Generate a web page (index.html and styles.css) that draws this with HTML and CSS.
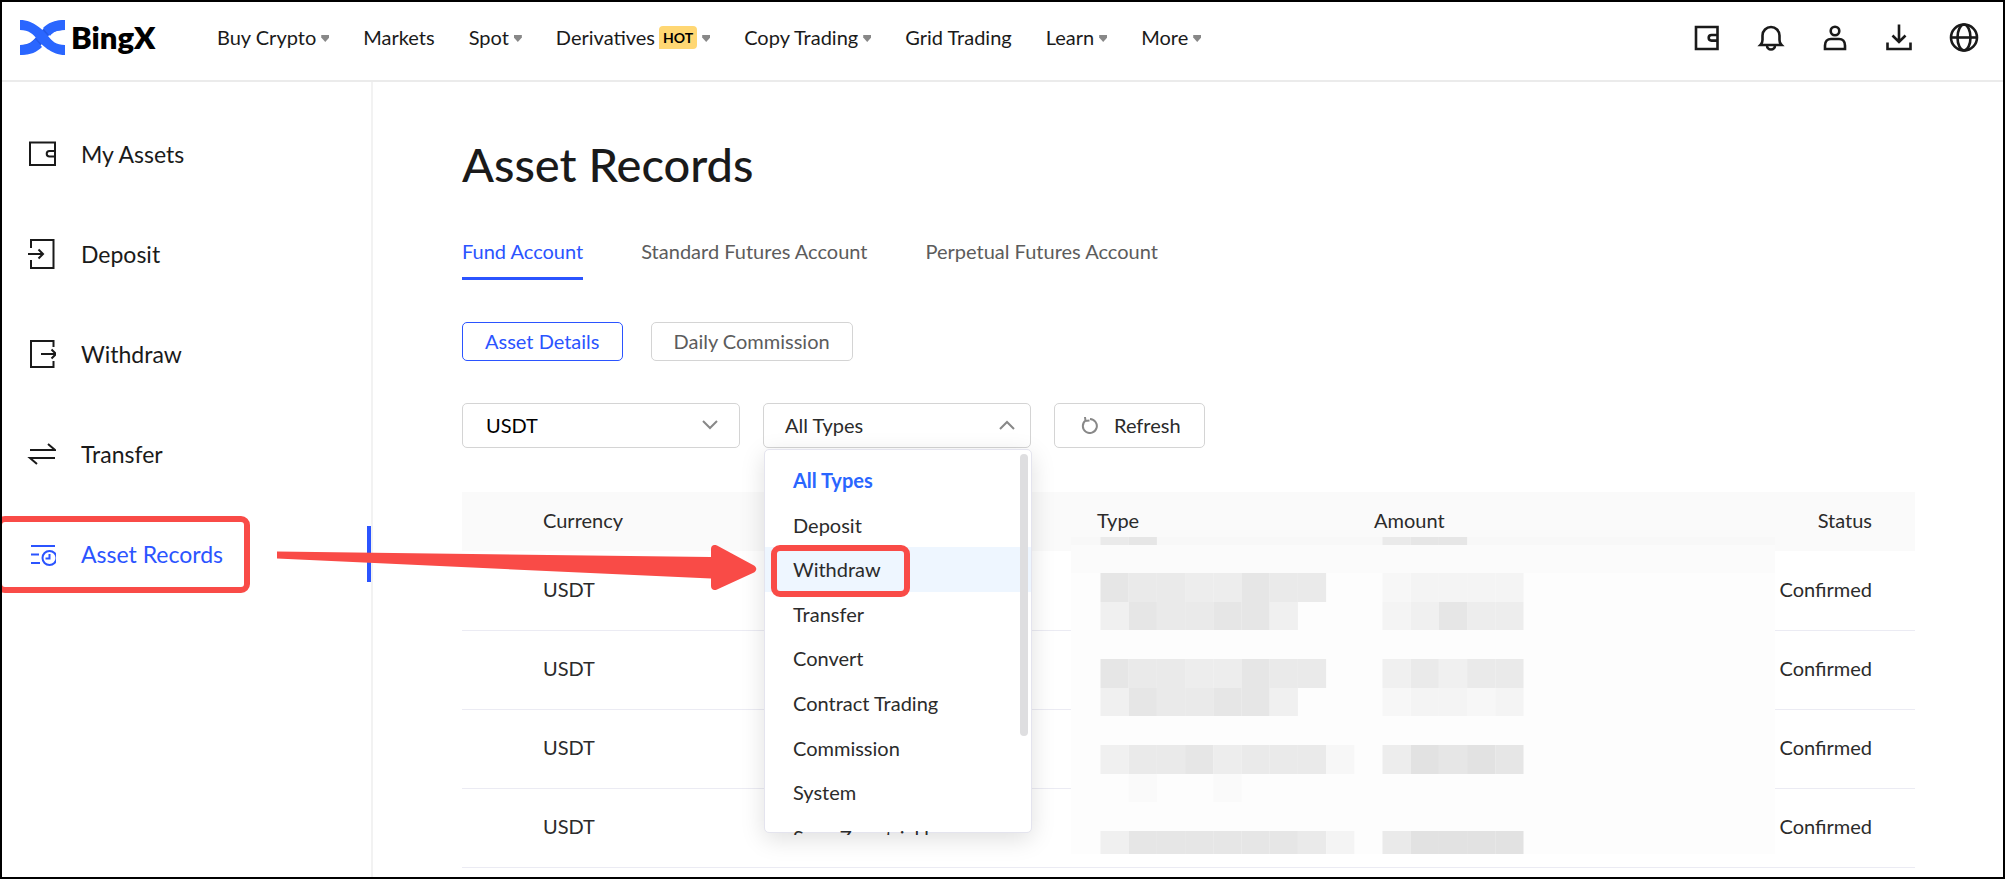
FILE: index.html
```html
<!DOCTYPE html>
<html lang="en">
<head>
<meta charset="utf-8">
<title>Asset Records - BingX</title>
<link rel="stylesheet" href="styles.css">
</head>
<body>
<header class="header">
  <a class="logo" href="#" aria-label="BingX">
    <svg class="logo-mark" width="45" height="35" viewBox="0 0 45 35" aria-hidden="true">
      <path d="M45 0v10C34 10 29 14 25 20S12 35 0 35V25c9 0 13-4 17-9S30 0 45 0z" fill="#2459e8"/>
      <path d="M0 0v10c9 0 13 4 17 9s14 16 28 16V25c-9 0-13-4-17-9S14 0 0 0z" fill="#2a66ff"/>
      <path d="M45 0v10c-8 0-12 2-15 6l-7-8C28 3 34 0 45 0zM0 35V25c8 0 12-2 15-6l7 8C17 32 11 35 0 35z" fill="#2a66ff"/>
    </svg>
    <span class="logo-text">BingX</span>
  </a>
  <nav class="nav">
    <a class="nav-link" href="#">Buy Crypto<i class="caret"></i></a>
    <a class="nav-link" href="#">Markets</a>
    <a class="nav-link" href="#">Spot<i class="caret"></i></a>
    <a class="nav-link" href="#">Derivatives<span class="hot">HOT</span><i class="caret"></i></a>
    <a class="nav-link" href="#">Copy Trading<i class="caret"></i></a>
    <a class="nav-link" href="#">Grid Trading</a>
    <a class="nav-link" href="#">Learn<i class="caret"></i></a>
    <a class="nav-link" href="#">More<i class="caret"></i></a>
  </nav>
  <div class="tools">
    <button class="tool" type="button" aria-label="Wallet"><svg width="28" height="28" viewBox="0 0 28 28"><path d="M3 4h21.500v22H3zM24.500 12h-6a2.800 2.800 0 0 0 0 5.600h6"/></svg></button>
    <button class="tool" type="button" aria-label="Notifications"><svg width="28" height="28" viewBox="0 0 28 28"><path d="M3.500 22c1.500-1.500 2-3 2-5v-4.500a8.500 8.500 0 0 1 17 0V17c0 2 .5 3.500 2 5zM10 22.500a4 4 0 0 0 8 0"/></svg></button>
    <button class="tool" type="button" aria-label="Account"><svg width="28" height="28" viewBox="0 0 28 28"><circle cx="14" cy="8" r="4.300"/><path d="M4 26v-3.500c0-4 2.500-6.500 6-6.500h8c3.500 0 6 2.500 6 6.500V26z"/></svg></button>
    <button class="tool" type="button" aria-label="Download"><svg width="28" height="28" viewBox="0 0 28 28"><path d="M14 1.500v17M7.500 12.500l6.500 6.500 6.500-6.500M2.500 19.500V26h23v-6.500"/></svg></button>
    <button class="tool" type="button" aria-label="Language"><svg width="30" height="30" viewBox="0 0 30 30"><circle cx="15" cy="15.500" r="13"/><ellipse cx="15" cy="15.500" rx="6.500" ry="13"/><path d="M2 15.500h26"/></svg></button>
  </div>
</header>
<div class="page">
  <aside class="sidebar">
    <a class="side-link" href="#"><svg width="30" height="30" viewBox="0 0 30 30"><path d="M4 3.500h25V26H4zM29 12h-5.500a2.800 2.800 0 0 0 0 5.600H29"/></svg>My Assets</a>
    <a class="side-link" href="#"><svg width="30" height="30" viewBox="0 0 30 30"><path d="M5 9V1h22.500v28H5v-8M2 15h14M12.500 10.500L17 15l-4.500 4.500"/></svg>Deposit</a>
    <a class="side-link" href="#"><svg width="30" height="30" viewBox="0 0 30 30"><path d="M27.500 8V2H5v26h22.500v-6M15 15h15M25.500 10.500L30 15l-4.500 4.500"/></svg>Withdraw</a>
    <a class="side-link" href="#"><svg width="30" height="30" viewBox="0 0 30 30"><path d="M4 11h25l-7-6M29 19H4l7 6"/></svg>Transfer</a>
    <a class="side-link active" href="#" aria-current="page"><svg width="30" height="30" viewBox="0 0 30 30"><path d="M5 7h24M5 15.500h8M5 24h9"/><circle cx="23.500" cy="19" r="7"/><path d="M23.500 15v4.500h-4"/></svg>Asset Records</a>
  </aside>
  <main class="main">
    <h1 class="title">Asset Records</h1>
    <nav class="tabs">
      <a class="tab active" href="#">Fund Account</a>
      <a class="tab" href="#">Standard Futures Account</a>
      <a class="tab" href="#">Perpetual Futures Account</a>
    </nav>
    <div class="views">
      <button class="view active" type="button">Asset Details</button>
      <button class="view" type="button">Daily Commission</button>
    </div>
    <div class="filters">
      <button class="picker picker-currency" type="button" aria-haspopup="listbox">USDT<svg width="16" height="10" viewBox="0 0 16 10"><path d="M1 1l7 7 7-7"/></svg></button>
      <div class="picker-wrap">
        <button class="picker picker-type" type="button" aria-haspopup="listbox" aria-expanded="true">All Types<svg width="16" height="10" viewBox="0 0 16 10"><path d="M1 9l7-7 7 7"/></svg></button>
        <div class="menu">
          <ul class="options" role="listbox" aria-label="Type">
            <li class="option selected" role="option" aria-selected="true">All Types</li>
            <li class="option" role="option">Deposit</li>
            <li class="option hover" role="option">Withdraw</li>
            <li class="option" role="option">Transfer</li>
            <li class="option" role="option">Convert</li>
            <li class="option" role="option">Contract Trading</li>
            <li class="option" role="option">Commission</li>
            <li class="option" role="option">System</li>
            <li class="option" role="option">SwapZero trial bonuses</li>
          </ul>
          <span class="scrollbar"></span>
          <span class="mark mark-option"></span>
        </div>
      </div>
      <button class="refresh" type="button"><svg width="17" height="18" viewBox="0 0 17 18"><path d="M4.500 4.500A7 7 0 1 0 9 3M4 1l.5 4 4-.5"/></svg>Refresh</button>
    </div>
    <div class="records">
      <table class="table">
        <thead><tr><th class="col-currency">Currency</th><th class="col-type">Type</th><th class="col-amount">Amount</th><th class="col-status">Status</th></tr></thead>
        <tbody>
          <tr><td>USDT</td><td></td><td></td><td>Confirmed</td></tr>
          <tr><td>USDT</td><td></td><td></td><td>Confirmed</td></tr>
          <tr><td>USDT</td><td></td><td></td><td>Confirmed</td></tr>
          <tr><td>USDT</td><td></td><td></td><td>Confirmed</td></tr>
        </tbody>
      </table>
      <svg class="mosaic" viewBox="0 0 704 317" aria-hidden="true" id="mosaic"></svg>
    </div>
  </main>
</div>
<span class="mark mark-side"></span>
<svg class="arrow" width="480" height="46" viewBox="0 0 480 46" aria-hidden="true"><path d="M0 6.500L434 12V4c0-3.500 3-5 6-3.500l37 20c3 2 3 5 0 7l-37 17c-3 1.500-6 0-6-3.500v-7.500L0 13.500z"/></svg>
<script src="mosaic.js"></script>
</body>
</html>
```
FILE: mosaic.js
```js
// Pixelated cover over the private columns: one letter per 28px cell, darker for later letters.
const shades = { a: "#fafafa", b: "#f7f7f7", c: "#f4f4f4", d: "#f0f0f0", e: "#ededed", f: "#eaeaea", g: "#e6e6e6", h: "#e2e2e2" };
const cell = 28.2;
const blocks = [
  { x: 29.500, y: 0, h: 8, row: "fg" },
  { x: 311.500, y: 0, h: 8, row: "fgg" },
  { x: 29.500, y: 36, h: 29, row: "gffeegff" },
  { x: 29.500, y: 65, h: 28, row: "dgffggd" },
  { x: 311.500, y: 36, h: 29, row: "bcccc" },
  { x: 311.500, y: 65, h: 28, row: "cdgee" },
  { x: 29.500, y: 122, h: 29, row: "gffeegff" },
  { x: 29.500, y: 151, h: 28, row: "dgffggd" },
  { x: 311.500, y: 122, h: 29, row: "dfdff" },
  { x: 311.500, y: 151, h: 28, row: "bccbc" },
  { x: 29.500, y: 208, h: 29, row: "dffgefffb" },
  { x: 29.500, y: 237, h: 28, row: " a  a" },
  { x: 311.500, y: 208, h: 29, row: "ehghg" },
  { x: 29.500, y: 294, h: 23, row: "dggggggfc" },
  { x: 311.500, y: 294, h: 23, row: "fhhhh" }
];
const svg = document.getElementById("mosaic");
function rect(x, y, w, h, fill) {
  const r = document.createElementNS("http://www.w3.org/2000/svg", "rect");
  Object.entries({ x, y, width: w, height: h, fill }).forEach(([k, v]) => r.setAttribute(k, v));
  svg.appendChild(r);
}
rect(0, 0, 704, 317, "#fdfdfd");
rect(0, 0, 704, 36, "#fbfbfb");
rect(0, 0, 704, 8, "#f8f8f8");
blocks.forEach(b => [...b.row].forEach((s, i) => {
  if (shades[s]) rect(b.x + i * cell, b.y, cell, b.h, shades[s]);
}));
```
FILE: styles.css
```css
* { box-sizing: border-box; }
body {
  margin: 0;
  position: relative;
  height: 100vh;
  display: flex;
  flex-direction: column;
  overflow: hidden;
  border: 2px solid #000;
  background: #fff;
  color: #2b2b2b;
  font: 20px/26px Lato, "Open Sans", sans-serif;
}
a { color: inherit; text-decoration: none; }
button { font: inherit; color: inherit; background: none; margin: 0; }
svg { fill: none; stroke: currentColor; flex: none; }

.header { flex: none; height: 80px; display: flex; align-items: center; padding: 0 24px 8px 18px; border-bottom: 2px solid #ebebeb; color: #1a1a1a; }
.logo { display: flex; align-items: center; gap: 6px; width: 197px; color: #000; }
.logo-mark { stroke: none; }
.logo-text { font: 800 31px/34px Lato, sans-serif; }
.nav { display: flex; align-items: center; gap: 34px; }
.nav-link { display: flex; align-items: center; white-space: nowrap; }
.caret { margin: 3px 0 0 5px; width: 8px; height: 7px; background: #888; clip-path: polygon(0 0, 100% 0, 100% 35%, 50% 100%, 0 35%); }
.hot { margin: 0 0 0 4px; padding: 0 4px; border-radius: 4px 4px 4px 0; background: #ffd773; color: #000; font: 700 14px/23px Lato, sans-serif; }
.tools { margin-left: auto; display: flex; align-items: center; gap: 36px; }
.tool { display: flex; padding: 0; border: 0; stroke-width: 2.600; }

.page { flex: 1; display: flex; min-height: 0; }
.sidebar { flex: none; width: 371px; padding-top: 44px; border-right: 2px solid #f2f2f2; display: flex; flex-direction: column; gap: 44px; font-size: 23px; color: #1a1a1a; }
.side-link { display: flex; align-items: center; gap: 25px; height: 56px; padding-left: 24px; stroke-width: 2; }
.side-link.active { color: #2b54ff; border-right: 4px solid #2b54ff; }

.main { flex: 1; min-width: 0; padding: 54px 88px 0 89px; }
.title { margin: 0; font-size: 47px; line-height: 56px; font-weight: 500; color: #1a1a1a; }
.tabs { display: flex; gap: 58px; margin-top: 46px; color: #5c5c5c; }
.tab { padding-bottom: 13px; border-bottom: 3px solid transparent; white-space: nowrap; }
.tab.active { color: #2b54ff; border-color: #2b54ff; }
.views { display: flex; gap: 28px; margin-top: 42px; }
.view { height: 39px; padding: 0 22px 2px; border: 1px solid #d4d4d4; border-radius: 5px; color: #5c5c5c; }
.view.active { color: #2b54ff; border-color: #2b54ff; }
.filters { display: flex; gap: 23px; margin-top: 42px; }
.picker-wrap { position: relative; z-index: 2; }
.picker { display: flex; align-items: center; justify-content: space-between; height: 45px; padding: 0 21px 2px; border: 1px solid #d4d4d4; border-radius: 5px; background: #fff; }
.picker svg { color: #888; stroke-width: 2; }
.picker-currency { width: 278px; color: #000; padding-left: 23px; }
.picker-type { width: 268px; padding-right: 15px; }
.refresh { display: flex; align-items: center; gap: 16px; height: 45px; padding: 0 23px 2px 26px; border: 1px solid #d4d4d4; border-radius: 5px; }
.refresh svg { color: #888; stroke-width: 2; }

.menu { position: absolute; top: 46px; left: 1px; width: 268px; height: 384px; border: 1px solid #e4e4ee; border-radius: 5px; background: #fff; box-shadow: 0 6px 24px rgba(0, 0, 0, .13); }
.options { display: grid; grid-template-rows: repeat(9, calc(401px / 9)); height: 385px; margin: 0; padding: 8px 0 0; list-style: none; overflow: hidden; }
.option { display: flex; align-items: center; padding-left: 28px; }
.option.selected { color: #2a66ff; font-weight: 700; }
.option.hover { background: #eef6ff; }
.scrollbar { position: absolute; top: 4px; right: 3px; width: 8px; height: 282px; border-radius: 4px; background: #dedee0; }

.records { position: relative; margin-top: 44px; }
.table { width: 100%; table-layout: fixed; border-collapse: collapse; }
th { height: 59px; padding: 0 0 3px; background: #fafafa; font-weight: 400; text-align: left; }
td { height: 79px; padding: 0 0 3px; border-bottom: 1px solid #ebebf3; }
.col-currency { width: 635px; }
.col-type { width: 277px; }
.col-amount { width: 277px; }
th:first-child, td:first-child { padding-left: 81px; }
th:last-child, td:last-child { padding-right: 43px; text-align: right; }
.mosaic { position: absolute; top: 45px; left: 609px; width: 704px; height: 317px; stroke: none; }

.mark { position: absolute; border: 6px solid #f94b47; border-radius: 9px; }
.mark-option { top: 95px; left: 6px; width: 139px; height: 52px; }
.mark-side { top: 514px; left: -6px; width: 254px; height: 77px; }
.arrow { position: absolute; top: 543px; left: 275px; z-index: 3; fill: #f94b47; stroke: none; }
```
